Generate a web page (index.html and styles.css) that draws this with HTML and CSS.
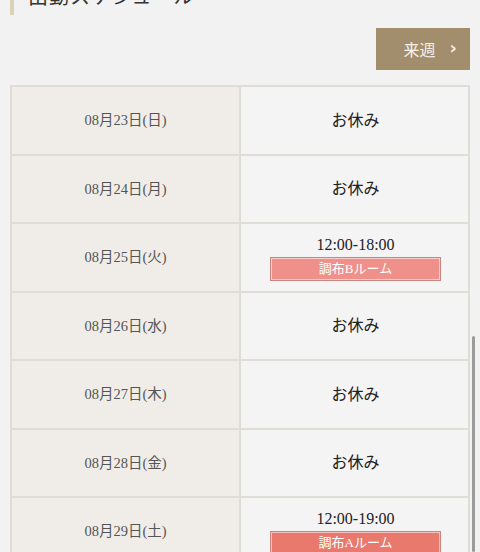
FILE: index.html
```html
<!DOCTYPE html>
<html lang="ja">
<head>
  <meta charset="UTF-8" />
  <meta name="viewport" content="width=device-width, initial-scale=1">
  <title>出勤スケジュール</title>
  <link rel="stylesheet" href="styles.css">
</head>
<body>

  <div class="page">
    <h2 class="title">出勤スケジュール</h2>

    <div class="week-nav">
      <button class="next-week">来週<span class="chevron">›</span></button>
    </div>

    <div class="schedule">
      <div class="row">
        <div class="date">08月23日(日)</div>
        <div class="slot"><span class="off">お休み</span></div>
      </div>
      <div class="row">
        <div class="date">08月24日(月)</div>
        <div class="slot"><span class="off">お休み</span></div>
      </div>
      <div class="row">
        <div class="date">08月25日(火)</div>
        <div class="slot">
          <div class="time">12:00-18:00</div>
          <div class="room room-b">調布Bルーム</div>
        </div>
      </div>
      <div class="row">
        <div class="date">08月26日(水)</div>
        <div class="slot"><span class="off">お休み</span></div>
      </div>
      <div class="row">
        <div class="date">08月27日(木)</div>
        <div class="slot"><span class="off">お休み</span></div>
      </div>
      <div class="row">
        <div class="date">08月28日(金)</div>
        <div class="slot"><span class="off">お休み</span></div>
      </div>
      <div class="row">
        <div class="date">08月29日(土)</div>
        <div class="slot">
          <div class="time">12:00-19:00</div>
          <div class="room room-a">調布Aルーム</div>
        </div>
      </div>
    </div>
  </div>

  <div class="scrollbar"></div>

</body>
</html>
```

FILE: styles.css
```css
* {
  box-sizing: border-box;
  margin: 0;
  padding: 0;
}

html, body {
  height: 100%;
  overflow: hidden;
}

body {
  font-family: "Liberation Serif", "Noto Sans CJK JP", serif;
  background: #f2f2f2;
  color: #222;
}

/* page is shown scrolled a little down */
.page {
  margin-top: -16px;
  padding: 0 10px;
}

.title {
  height: 31px;
  line-height: 26px;
  border-left: 4px solid #dcd3b6;
  padding-left: 14px;
  font-size: 20px;
  font-weight: normal;
  color: #333;
  letter-spacing: 1px;
}

.week-nav {
  display: flex;
  justify-content: flex-end;
  margin-top: 13px;
}

.next-week {
  width: 94px;
  height: 42px;
  background: #a28d6c;
  color: #f6f1e8;
  border: none;
  font-family: inherit;
  font-size: 16px;
  display: flex;
  align-items: center;
  justify-content: flex-end;
  gap: 14px;
  padding-right: 13px;
  cursor: pointer;
}

.chevron {
  font-family: "DejaVu Sans", sans-serif;
  font-size: 18px;
  font-weight: bold;
  line-height: 1;
  margin-top: -2px;
}

.schedule {
  margin-top: 15px;
  border-top: 2px solid #e0ddd9;
  border-left: 2px solid #e0ddd9;
  border-right: 2px solid #e0ddd9;
}

.row {
  display: grid;
  grid-template-columns: 229px 1fr;
  height: 68.5px;
  border-bottom: 2px solid #e0ddd9;
}

.date {
  background: #f0ede9;
  border-right: 2px solid #e0ddd9;
  display: flex;
  align-items: center;
  justify-content: center;
  padding-bottom: 3px;
  font-size: 14.5px;
  color: #555;
}

.slot {
  background: #f4f4f4;
  display: flex;
  flex-direction: column;
  align-items: center;
  justify-content: center;
  padding-top: 2px;
  padding-left: 2px;
}

.off {
  font-size: 16px;
  color: #222;
  margin-bottom: 5px;
}

.time {
  font-size: 16px;
  line-height: 20px;
  color: #222;
  margin-bottom: 2px;
}

.room {
  width: 171px;
  height: 24px;
  line-height: 22px;
  text-align: center;
  font-size: 13px;
  color: #fff;
  border: 1px solid #c98580;
  box-shadow: inset 0 0 0 1px rgba(255, 255, 255, 0.55);
}

.room-b {
  background: #ef918a;
}

.room-a {
  background: #e9796d;
}

.scrollbar {
  position: absolute;
  left: 472px;
  top: 336px;
  width: 3px;
  height: 216px;
  background: #9b9b9b;
  border-radius: 2px;
}
```
